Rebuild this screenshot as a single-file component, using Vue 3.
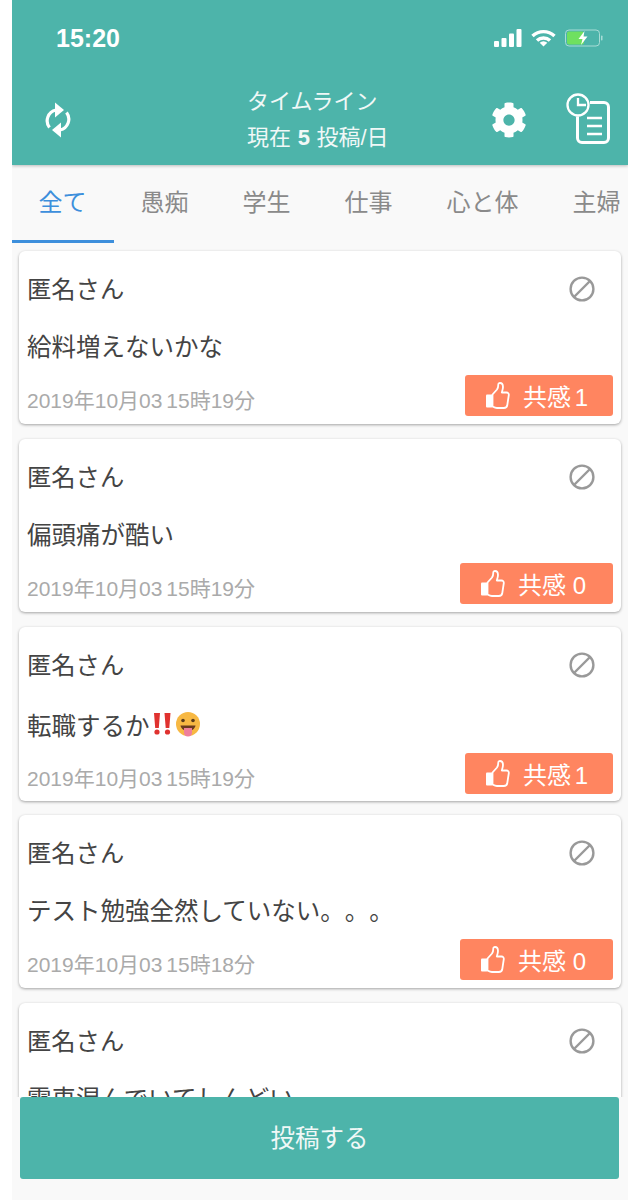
<template>
  <div class="page">
    <header class="header">
      <div class="status">
        <span class="clock">15:20</span>
        <div class="status-icons">
          <svg width="28" height="18" viewBox="0 0 28 18" fill="#fff">
            <rect x="0" y="12" width="5" height="6" rx="1" />
            <rect x="7.5" y="9" width="5" height="9" rx="1" />
            <rect x="15" y="4.5" width="5" height="13.5" rx="1" />
            <rect x="22.5" y="0" width="5" height="18" rx="1" />
          </svg>
          <svg width="25" height="18" viewBox="0 0 25 18" fill="none" stroke="#fff" stroke-width="3.4">
            <path d="M1.500 7a16 16 0 0 1 22 0" />
            <path d="M6 11.500a9.500 9.500 0 0 1 13 0" />
            <path d="M12.500 17.500l-3.800-3.800a5.400 5.400 0 0 1 7.600 0z" fill="#fff" stroke="none" />
          </svg>
          <svg width="38" height="18" viewBox="0 0 38 18">
            <rect x="0.500" y="1" width="34" height="16" rx="3.500" fill="none" stroke="#a9dcd6" stroke-width="1" />
            <rect x="2" y="2.500" width="17" height="13" rx="2" fill="#6fe05f" />
            <rect x="36" y="6.500" width="1.500" height="5" rx="0.700" fill="#a9dcd6" />
            <path d="M19.500 2l-6 8h4l-1.500 6 6.500-8.500h-4z" fill="#fff" />
          </svg>
        </div>
      </div>
      <div class="nav">
        <div class="nav-left">
          <svg width="28" height="36" viewBox="0 0 28 36" fill="none" stroke="#fff" stroke-width="3.2">
            <g>
              <path d="M12 8A11 11 0 0 0 5.500 25.500" />
              <path d="M11 0.500L20 8l-9 7.500z" fill="#fff" stroke="none" />
            </g>
            <g transform="rotate(180 14 18)">
              <path d="M12 8A11 11 0 0 0 5.500 25.500" />
              <path d="M11 0.500L20 8l-9 7.500z" fill="#fff" stroke="none" />
            </g>
          </svg>
        </div>
        <div class="title">
          <div>タイムライン</div>
          <div class="title-count">現在 <b>5</b> 投稿/日</div>
        </div>
        <div class="nav-right">
          <svg width="36" height="36" viewBox="0 0 512 512" fill="#fff">
            <path d="M487.4 315.7l-42.6-24.6c4.3-23.2 4.3-47 0-70.2l42.6-24.6c4.9-2.8 7.1-8.6 5.5-14-11.1-35.6-30-67.8-54.7-94.6-3.8-4.1-10-5.1-14.8-2.3L380.8 110c-17.9-15.4-38.5-27.3-60.8-35.1V25.8c0-5.6-3.9-10.5-9.4-11.7-36.7-8.2-74.3-7.8-109.2 0-5.5 1.2-9.4 6.1-9.4 11.7V75c-22.2 7.9-42.8 19.8-60.8 35.1L88.7 85.5c-4.9-2.8-11-1.9-14.8 2.3-24.7 26.7-43.6 58.9-54.7 94.6-1.7 5.4.6 11.2 5.5 14L67.3 221c-4.3 23.2-4.3 47 0 70.2l-42.6 24.6c-4.9 2.8-7.1 8.6-5.5 14 11.1 35.6 30 67.8 54.7 94.6 3.8 4.1 10 5.1 14.8 2.3l42.6-24.6c17.9 15.4 38.5 27.3 60.8 35.1v49.2c0 5.6 3.9 10.5 9.4 11.7 36.7 8.2 74.3 7.8 109.2 0 5.5-1.2 9.4-6.1 9.4-11.7v-49.2c22.2-7.9 42.8-19.8 60.8-35.1l42.6 24.6c4.9 2.8 11 1.9 14.8-2.3 24.7-26.7 43.6-58.9 54.7-94.6 1.5-5.5-.7-11.3-5.6-14.1zM256 336c-44.1 0-80-35.9-80-80s35.9-80 80-80 80 35.9 80 80-35.9 80-80 80z" />
          </svg>
          <svg width="45" height="54" viewBox="0 0 45 54" fill="none" stroke="#fff" stroke-width="2.300">
            <circle cx="12" cy="12" r="10.500" />
            <path d="M12 5v7h8" />
            <path d="M24 9.500h14a4.500 4.500 0 0 1 4.500 4.500v31a4.500 4.500 0 0 1-4.500 4.500H16a4.500 4.500 0 0 1-4.500-4.500V23.500" stroke-width="3" />
            <path d="M21 25h15M21 33h15M21 41h15" />
          </svg>
        </div>
      </div>
    </header>

    <nav class="tabs">
      <div v-for="(tab, i) in tabs" :key="tab" class="tab" :class="{ active: i === 0 }">{{ tab }}</div>
    </nav>

    <main class="list">
      <article v-for="(post, i) in posts" :key="i" class="card" :class="{ tall: post.emoji }">
        <div class="card-head">
          <span>匿名さん</span>
          <svg class="block" width="26" height="26" viewBox="0 0 26 26" fill="none" stroke="#999" stroke-width="2.4">
            <circle cx="13" cy="13" r="11.400" />
            <path d="M5 21L21 5" />
          </svg>
        </div>
        <div class="content">
          {{ post.text }}
          <svg v-if="post.emoji" class="emoji" width="50" height="26" viewBox="0 0 50 26">
            <path d="M3 2h6l-1.200 15H4.200zM13.500 2h6l-1.200 15h-3.600z" fill="#e0322f" />
            <circle cx="6" cy="21" r="2.600" fill="#e0322f" />
            <circle cx="16.500" cy="21" r="2.600" fill="#e0322f" />
            <circle cx="37" cy="13" r="12" fill="#f7b843" />
            <circle cx="32" cy="9.500" r="1.800" fill="#5a3a1a" />
            <circle cx="42" cy="9.500" r="1.800" fill="#5a3a1a" />
            <path d="M29.500 14.500h15c-1 4-4 5.500-7.500 5.500s-6.500-1.500-7.500-5.500z" fill="#6b3a1e" />
            <path d="M33 17h8v4.500a4 4 0 0 1-8 0z" fill="#ef7f9b" />
          </svg>
        </div>
        <div v-if="post.date" class="card-foot">
          <span class="date">{{ post.date }}</span>
          <button class="like" :class="{ narrow: post.likes === 1 }">
            <svg width="28" height="28" viewBox="0 0 28 28" fill="none" stroke="#fff" stroke-width="1.800" stroke-linejoin="round">
              <path d="M8.500 12.500l4.500-5c1-1.500 1.300-3 1.300-5 0-1 .7-1.500 1.700-1.500 2 0 3 2 3 4 0 2-.7 4-1.200 5.500h4.700c1.500 0 2.500 1.200 2.300 2.700l-1.500 9.800c-.3 2-1.500 3-3.500 3H13c-2 0-3-.7-4.500-1.500z" />
              <rect x="2" y="12.500" width="6.500" height="13" rx="1" fill="#fff" stroke="none" />
            </svg>
            <span>共感 {{ post.likes }}</span>
          </button>
        </div>
      </article>
    </main>

    <footer class="footer">
      <button class="submit">投稿する</button>
    </footer>
  </div>
</template>

<script setup>
const tabs = ['全て', '愚痴', '学生', '仕事', '心と体', '主婦']

// 最後の投稿はボタンの下に隠れるので本文まで
const posts = [
  { text: '給料増えないかな', date: '2019年10月03 15時19分', likes: 1 },
  { text: '偏頭痛が酷い', date: '2019年10月03 15時19分', likes: 0 },
  { text: '転職するか', date: '2019年10月03 15時19分', likes: 1, emoji: true },
  { text: 'テスト勉強全然していない。。。', date: '2019年10月03 15時18分', likes: 0 },
  { text: '電車混んでいてしんどい' }
]
</script>

<style>
html,
body {
  background: #fff;
}
</style>

<style scoped>
.page {
  display: flex;
  flex-direction: column;
  width: 616px;
  height: 1200px;
  margin-left: 12px;
  overflow: hidden;
  background: #f9f9f9;
  font-family: "Liberation Sans", "Noto Sans CJK JP", sans-serif;
  color: #444;
  text-spacing-trim: space-all;
}

.header {
  flex: none;
  height: 165px;
  background: #4db4aa;
  color: #fff;
  box-shadow: 0 1px 3px rgba(0, 0, 0, 0.25);
  position: relative;
}

.status {
  display: flex;
  justify-content: space-between;
  align-items: center;
  height: 76px;
  padding: 0 25px 0 44px;
}

.clock {
  font-size: 25px;
  font-weight: 700;
}

.status-icons {
  display: flex;
  align-items: center;
  gap: 9px;
}

.nav {
  display: grid;
  grid-template-columns: 203px auto 1fr;
  align-items: center;
  height: 88px;
  padding: 0 17px 0 32px;
}

.nav-left {
  display: flex;
}

.nav-right {
  display: flex;
  justify-content: flex-end;
  align-items: center;
  gap: 39px;
}

.title {
  font-size: 22px;
  line-height: 36px;
  color: #f0f8f7;
  white-space: nowrap;
}

.title-count {
  word-spacing: 0.500px;
}

.tabs {
  flex: none;
  display: flex;
  height: 78px;
  font-size: 24px;
  color: #8a8a8a;
  white-space: nowrap;
}

.tab {
  flex: none;
  padding: 0 27.500px 0 26.500px;
  line-height: 76px;
  box-sizing: border-box;
}

.tab.active {
  color: #3d8fdc;
  border-bottom: 3px solid #3d8fdc;
}

.list {
  flex: 1;
  min-height: 0;
  overflow: hidden;
  display: flex;
  flex-direction: column;
  gap: 15px;
  padding: 8px 7px 0;
}

.card {
  flex: none;
  box-sizing: border-box;
  height: 173px;
  padding: 19px 8px 0 8px;
  background: #fff;
  border-radius: 6px;
  box-shadow: 0 1px 3px rgba(0, 0, 0, 0.35);
}

.card-head {
  display: flex;
  justify-content: space-between;
  align-items: center;
  height: 34px;
  font-size: 24.300px;
  padding-right: 18px;
}

.block {
  position: relative;
  top: 2px;
}

.content {
  display: flex;
  align-items: center;
  height: 34px;
  margin-top: 24px;
  font-size: 24.500px;
  white-space: nowrap;
}

.card.tall {
  height: 174px;
  margin-bottom: -1px;
}

.card.tall .content {
  margin-top: 27px;
}

.card.tall .card-foot {
  margin-top: 12px;
}

.emoji {
  margin-left: 1px;
}

.card-foot {
  display: flex;
  justify-content: space-between;
  align-items: flex-end;
  margin-top: 13px;
}

.date {
  font-size: 21px;
  line-height: 30px;
  word-spacing: -2px;
  color: #aaa;
}

.like {
  display: flex;
  align-items: center;
  gap: 11px;
  height: 41px;
  padding: 0 27px 0 19px;
  border: 0;
  border-radius: 3px;
  background: #ff8560;
  color: #fff;
  font: inherit;
  font-size: 24px;
}

.like.narrow {
  padding-right: 25px;
  word-spacing: -3px;
}

.footer {
  flex: none;
  height: 103px;
  padding: 0 9px 21px 8px;
  box-sizing: border-box;
  background: #f9f9f9;
  display: flex;
}

.submit {
  flex: 1;
  border: 0;
  border-radius: 3px;
  padding: 0 0 3px;
  background: #4db4aa;
  color: #f0f8f7;
  font: inherit;
  font-size: 24.500px;
}
</style>
